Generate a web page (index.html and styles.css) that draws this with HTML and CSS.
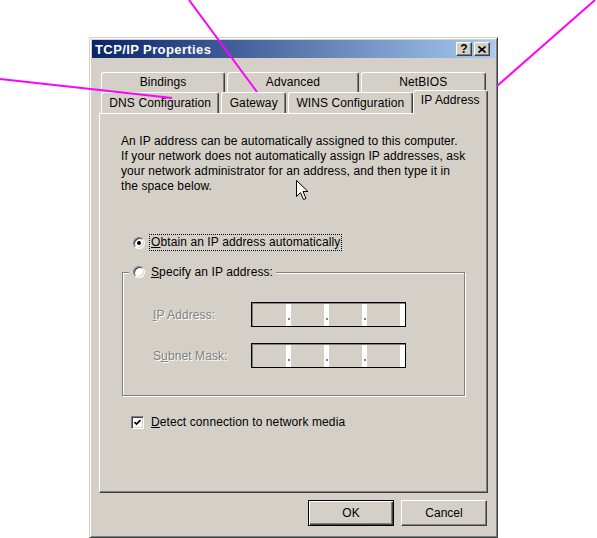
FILE: index.html
```html
<!DOCTYPE html>
<html lang="en">
<head>
    <meta charset="UTF-8">
    <title>TCP/IP Properties</title>
    <link rel="stylesheet" href="styles.css">
</head>
<body>
    <div class="dialog">
        <div class="titlebar">
            <span class="title">TCP/IP Properties</span>
            <div class="caption-btns">
                <span class="cap-btn help">?</span>
                <span class="cap-btn">
                    <svg width="8" height="7" viewBox="0 0 8 7"><path d="M0.5 0.5 L7.5 6.5 M7.5 0.5 L0.5 6.5" stroke="#000" stroke-width="1.7" fill="none"/></svg>
                </span>
            </div>
        </div>

        <div class="content">
            <div class="tabs">
                <div class="tab-row back">
                    <div class="tab">Bindings</div>
                    <div class="tab">Advanced</div>
                    <div class="tab">NetBIOS</div>
                </div>
                <div class="tab-row front">
                    <div class="tab">DNS Configuration</div>
                    <div class="tab">Gateway</div>
                    <div class="tab">WINS Configuration</div>
                    <div class="tab active">IP Address</div>
                </div>
            </div>

            <div class="panel">
                <p class="intro">An IP address can be automatically assigned to this computer.<br>If your network does not automatically assign IP addresses, ask<br>your network administrator for an address, and then type it in<br>the space below.</p>

                <div class="option first">
                    <span class="radio checked"></span>
                    <span class="focus"><u>O</u>btain an IP address automatically</span>
                </div>

                <div class="group">
                    <div class="group-title option">
                        <span class="radio"></span>
                        <span><u>S</u>pecify an IP address:</span>
                    </div>
                    <div class="ip-row">
                        <span class="ip-label disabled"><u>I</u>P Address:</span>
                        <div class="ip-field">
                            <span class="octet"></span><span class="sep"></span>
                            <span class="octet"></span><span class="sep"></span>
                            <span class="octet"></span><span class="sep"></span>
                            <span class="octet"></span><span class="tail"></span>
                        </div>
                    </div>
                    <div class="ip-row second">
                        <span class="ip-label disabled">S<u>u</u>bnet Mask:</span>
                        <div class="ip-field">
                            <span class="octet"></span><span class="sep"></span>
                            <span class="octet"></span><span class="sep"></span>
                            <span class="octet"></span><span class="sep"></span>
                            <span class="octet"></span><span class="tail"></span>
                        </div>
                    </div>
                </div>

                <div class="option check-row">
                    <span class="checkbox">
                        <svg width="7" height="7" viewBox="0 0 7 7"><path d="M0.5 3 L2.5 5 L6.5 1" stroke="#000" stroke-width="1.6" fill="none"/></svg>
                    </span>
                    <span><u>D</u>etect connection to network media</span>
                </div>
            </div>

            <div class="actions">
                <button class="btn default">OK</button>
                <button class="btn">Cancel</button>
            </div>
        </div>
    </div>

    <!-- callout lines -->
    <svg class="callouts" width="597" height="538" viewBox="0 0 597 538">
        <line x1="0" y1="79" x2="172" y2="98" stroke="#ff00ff" stroke-width="2"/>
        <line x1="189" y1="0" x2="257" y2="92" stroke="#ff00ff" stroke-width="2"/>
        <line x1="595" y1="0" x2="497" y2="86" stroke="#ff00ff" stroke-width="2"/>
    </svg>

    <svg class="cursor" width="13" height="21" viewBox="0 0 13 21">
        <path d="M0.5 0.5 V16.5 L4.5 12.5 L7.5 19.5 L10 18.5 L7 11.5 H12 Z" fill="#fff" stroke="#000" stroke-width="1"/>
    </svg>
</body>
</html>
```

FILE: styles.css
```css
body {
    margin: 0;
    position: relative;
    width: 597px;
    height: 538px;
    overflow: hidden;
    background: #fff;
    font-family: "Liberation Sans", Arial, sans-serif;
    font-size: 12px;
    letter-spacing: 0.1px;
    color: #000;
}
.dialog {
    margin: 37px 0 0 89px;
    width: 409px;
    box-sizing: border-box;
    background: #d4d0c8;
    border: 1px solid;
    border-color: #d4d0c8 #404040 #404040 #d4d0c8;
    box-shadow: inset 1px 1px #fff, inset -1px -1px #808080;
    padding: 2px;
}
.titlebar {
    height: 18px;
    display: flex;
    align-items: center;
    justify-content: space-between;
    padding: 0 5px 0 3px;
    background: linear-gradient(to right, #0a246a, #a6caf0);
}
.title {
    color: #fff;
    font-weight: bold;
    font-size: 13px;
    letter-spacing: 0.4px;
}
.caption-btns {
    display: flex;
    gap: 2px;
}
.cap-btn {
    width: 16px;
    height: 14px;
    box-sizing: border-box;
    display: flex;
    align-items: center;
    justify-content: center;
    background: #d4d0c8;
    border: 1px solid;
    border-color: #fff #404040 #404040 #fff;
    box-shadow: inset -1px -1px #808080;
}
.help {
    font-weight: bold;
    font-size: 12px;
    line-height: 12px;
}
.content {
    padding: 14px 7px 9px;
}
.tab-row {
    display: flex;
    gap: 2px;
    margin: 0 2px;
}
.tab-row.back {
    height: 18px;
    align-items: flex-start;
}
.tab-row.front {
    height: 23px;
    align-items: flex-end;
}
.tab {
    flex: 1 1 auto;
    box-sizing: border-box;
    text-align: center;
    white-space: nowrap;
    background: #d4d0c8;
    border: 1px solid #fff;
    border-bottom: none;
    border-right-color: #404040;
    border-radius: 3px 3px 0 0;
    box-shadow: inset -1px 0 #808080;
}
.back .tab {
    height: 20px;
    line-height: 19px;
}
.front .tab {
    height: 21px;
    line-height: 20px;
}
.front .tab.active {
    position: relative;
    z-index: 1;
    height: 24px;
    line-height: 19px;
    margin: 0 -2px -1px;
}
.panel {
    height: 380px;
    box-sizing: border-box;
    border: 1px solid;
    border-color: #fff #404040 #404040 #fff;
    box-shadow: inset -1px -1px #808080;
    padding: 20px 20px 0 21px;
}
.intro {
    margin: 0;
    line-height: 15px;
}
.option {
    display: flex;
    align-items: center;
    gap: 6px;
    height: 17px;
    line-height: 15px;
}
.option.first {
    margin: 40px 0 0 12px;
}
.focus {
    border: 1px dotted #000;
    padding: 0 1px;
    margin-left: -2px;
}
.radio {
    position: relative;
    width: 12px;
    height: 12px;
    box-sizing: border-box;
    border-radius: 50%;
    background: #fff;
    border: 1px solid;
    border-color: #808080 #fff #fff #808080;
    box-shadow: inset 1px 1px #404040, inset -1px -1px #d4d0c8;
}
.radio.checked::after {
    content: "";
    position: absolute;
    left: 3px;
    top: 3px;
    width: 4px;
    height: 4px;
    border-radius: 50%;
    background: #000;
}
.group {
    margin: 21px 0 0 1px;
    width: 343px;
    height: 124px;
    box-sizing: border-box;
    border: 1px solid #808080;
    box-shadow: inset 1px 1px #fff, 1px 1px #fff;
    padding: 0 0 0 30px;
}
.group-title {
    width: fit-content;
    margin: -9px 0 0 -24px;
    padding: 0 3px 0 4px;
    height: 16px;
    background: #d4d0c8;
}
.ip-row {
    display: flex;
    align-items: center;
    margin-top: 22px;
}
.ip-row.second {
    margin-top: 16px;
}
.ip-label {
    width: 98px;
}
.disabled {
    color: #808080;
    text-shadow: 1px 1px #fff;
}
.ip-field {
    display: flex;
    width: 155px;
    height: 25px;
    box-sizing: border-box;
    border: 1px solid #000;
    box-shadow: inset 1px 1px #808080;
    padding: 1px 0 0 1px;
    background: #fff;
}
.octet {
    width: 33px;
    background: #d4d0c8;
}
.sep {
    width: 5px;
    display: flex;
    align-items: flex-end;
    justify-content: center;
    padding-bottom: 6px;
    box-sizing: border-box;
}
.sep::before {
    content: "";
    width: 2px;
    height: 2px;
    background: #808080;
}
.tail {
    flex: 1;
}
.check-row {
    margin: 18px 0 0 10px;
    gap: 7px;
}
.checkbox {
    width: 13px;
    height: 13px;
    box-sizing: border-box;
    display: flex;
    align-items: center;
    justify-content: center;
    background: #fff;
    border: 1px solid;
    border-color: #808080 #fff #fff #808080;
    box-shadow: inset 1px 1px #404040, inset -1px -1px #d4d0c8;
}
.actions {
    display: flex;
    justify-content: flex-end;
    gap: 7px;
    margin: 7px 1px 0 0;
}
.btn {
    width: 86px;
    height: 26px;
    padding: 0;
    font-family: "Liberation Sans", Arial, sans-serif;
    font-size: 12px;
    color: #000;
    background: #d4d0c8;
    border: 1px solid;
    border-color: #fff #404040 #404040 #fff;
    box-shadow: inset -1px -1px #808080;
}
.btn.default {
    border-color: #000;
    box-shadow: inset 1px 1px #fff, inset -1px -1px #404040, inset -2px -2px #808080;
}
.callouts {
    position: absolute;
    left: 0;
    top: 0;
    pointer-events: none;
}
.cursor {
    position: absolute;
    left: 296px;
    top: 180px;
}
```
